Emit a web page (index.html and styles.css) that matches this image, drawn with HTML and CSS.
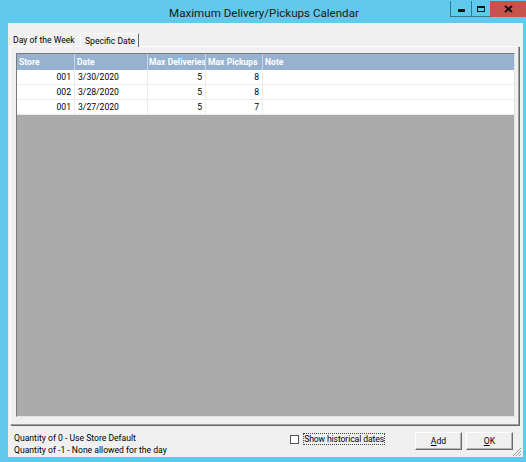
FILE: index.html
```html
<!DOCTYPE html>
<html>
<head>
<meta charset="utf-8">
<link rel="stylesheet" href="styles.css">
</head>
<body>
<div class="window">
  <div class="titlebar">
    <div class="title">Maximum Delivery/Pickups Calendar</div>
    <div class="controls">
      <div class="ctl min"><span class="min-glyph"></span></div>
      <div class="ctl max"><span class="max-glyph"></span></div>
      <div class="ctl close">
        <svg width="9" height="8" viewBox="0 0 9 8"><path d="M1 1 L8 7 M8 1 L1 7" stroke="#111" stroke-width="2"/></svg>
      </div>
    </div>
  </div>
  <div class="client">
    <div class="tabs">
      <div class="tab">Day of the Week</div>
      <div class="tab active">Specific Date</div>
    </div>
    <div class="panel">
      <div class="grid">
        <div class="row head">
          <div class="c store">Store</div>
          <div class="c date">Date</div>
          <div class="c deliv">Max Deliveries</div>
          <div class="c pick">Max Pickups</div>
          <div class="c note">Note</div>
        </div>
        <div class="row">
          <div class="c store num">001</div>
          <div class="c date">3/30/2020</div>
          <div class="c deliv num">5</div>
          <div class="c pick num">8</div>
          <div class="c note"></div>
        </div>
        <div class="row">
          <div class="c store num">002</div>
          <div class="c date">3/28/2020</div>
          <div class="c deliv num">5</div>
          <div class="c pick num">8</div>
          <div class="c note"></div>
        </div>
        <div class="row">
          <div class="c store num">001</div>
          <div class="c date">3/27/2020</div>
          <div class="c deliv num">5</div>
          <div class="c pick num">7</div>
          <div class="c note"></div>
        </div>
      </div>
    </div>
    <div class="footer">
      <div class="legend">
        <div>Quantity of 0 - Use Store Default</div>
        <div>Quantity of -1 - None allowed for the day</div>
      </div>
      <label class="check"><span class="box"></span><span class="focus">Show historical dates</span></label>
      <div class="btn"><u>A</u>dd</div>
      <div class="btn"><u>O</u>K</div>
      <svg class="grip" width="12" height="12" viewBox="0 0 12 12">
        <path d="M11 3 L3 11 M11 6 L6 11 M11 9 L9 11" stroke="#a0a0a0" stroke-width="1"/>
      </svg>
    </div>
  </div>
</div>
</body>
</html>
```
FILE: styles.css
```css
* { box-sizing: border-box; }
html, body { margin: 0; padding: 0; }
body {
  width: 526px; height: 462px; overflow: hidden;
  font-family: Roboto, "Noto Sans", sans-serif;
  font-size: 8.6px;
  color: #000;
  white-space: nowrap;
}
.window {
  width: 526px; height: 462px;
  background: #61c9eb;
  display: flex; flex-direction: column;
}
.titlebar {
  height: 23px; position: relative;
  display: flex; justify-content: center; align-items: center;
}
.title {
  font-family: Roboto, "Noto Sans", sans-serif;
  font-size: 11.6px; color: #1a1a1a; padding-top: 2px; padding-left: 2px;
}
.controls {
  position: absolute; top: 1px; right: 0;
  display: flex; height: 16px;
}
.ctl {
  height: 16px; display: flex; align-items: center; justify-content: center;
  border: 1px solid #2e7a96; border-top: none;
}
.min { width: 21px; border-right: none; }
.max { width: 19px; border-right: none; }
.close { width: 36px; background: #c7544b; border: none; }
.min-glyph { width: 7px; height: 3px; background: #111; margin-top: 4px; }
.max-glyph { width: 8px; height: 6px; border: 1px solid #111; border-top-width: 2px; }
.client {
  flex: 1; margin: 0 3px 5px 8px;
  background: #f0f0f0;
  display: flex; flex-direction: column;
  padding: 9px 4px 0 2px;
}
.tabs { display: flex; align-items: flex-end; height: 14px; }
.tab {
  height: 12px; line-height: 12px;
  padding-left: 3px;
}
.tab:first-child { width: 70px; }
.tab.active {
  height: 14px; line-height: 14px; width: 59px;
  background: #f0f0f0;
  border-left: 1px solid #fff; border-top: 1px solid #fff;
  border-right: 1px solid #696969;
  padding-left: 4px;
  margin-bottom: -1px; position: relative; z-index: 1;
}
.panel {
  height: 379px;
  border-left: 1px solid #fff; border-top: 1px solid #fff;
  border-right: 1px solid #a0a0a0; border-bottom: 1px solid #a0a0a0;
  box-shadow: 1px 1px 0 #696969;
  padding: 6px 3px 7px 5px;
  display: flex;
}
.grid {
  flex: 1;
  background: #ababab;
  border-top: 1px solid #7a7a7a; border-left: 1px solid #7a7a7a;
  border-right: 1px solid #e3e3e3; border-bottom: 1px solid #e3e3e3;
}
.row { display: flex; height: 15px; background: #fff; border-bottom: 1px solid #ececec; }
.row.head { height: 16px; background: #97b2d1; border-bottom: none; }
.c {
  line-height: 15px; padding: 0 3px;
  border-right: 1px solid #ececec; overflow: hidden;
}
.head .c { color: #fff; font-weight: bold; line-height: 16px; border-right: 1px solid #c9d6e6; padding: 0 2px; }
.num { text-align: right; }
.store { width: 58px; }
.date { width: 73px; }
.deliv { width: 58px; }
.head .deliv { padding: 0 1px; }
.pick { width: 57px; }
.note { flex: 1; border-right: none; }
.head .note { border-right: none; }
.footer {
  flex: 1; position: relative;
  display: flex; align-items: flex-start;
  padding: 6px 6px 0 4px;
}
.legend { line-height: 12px; padding-top: 1px; flex: 1; }
.check { display: flex; align-items: center; height: 12px; margin-top: 2px; }
.box {
  width: 9px; height: 9px; background: #fff; border: 1px solid #555; margin-right: 4px;
}
.focus { border: 1px dotted #444; padding: 0; line-height: 10px; letter-spacing: -0.1px; }
.btn {
  width: 47px; height: 18px;
  display: flex; align-items: center; justify-content: center;
  background: #f0f0f0;
  border-top: 1px solid #fff; border-left: 1px solid #fff;
  border-right: 1px solid #6b6b6b; border-bottom: 1px solid #6b6b6b;
  box-shadow: inset -1px -1px 0 #b5b5b5;
  margin-top: 1px;
}
.check + .btn { margin-left: 30px; }
.btn + .btn { margin-left: 4px; }
.grip { position: absolute; right: -3px; bottom: 0; }
```
